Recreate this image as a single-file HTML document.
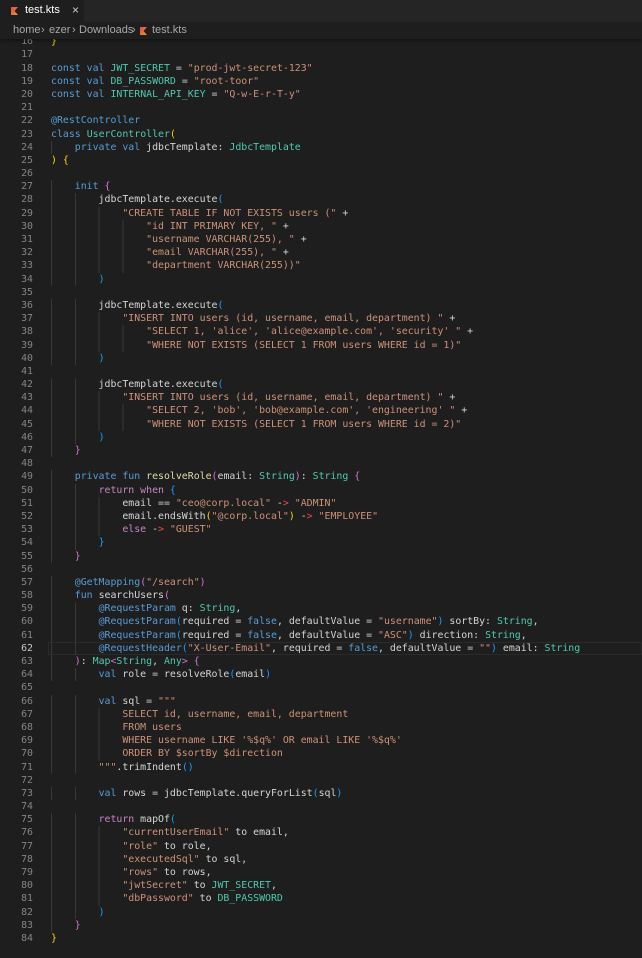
<!DOCTYPE html>
<html><head><meta charset="utf-8"><style>
*{margin:0;padding:0;box-sizing:border-box}
body{width:642px;height:958px;background:#1e1e1e;overflow:hidden;position:relative;font-family:"DejaVu Sans Mono","Liberation Mono",monospace}
#tabs{position:absolute;left:0;top:0;width:642px;height:22px;background:#252526;z-index:3}
#tab{position:absolute;left:0;top:0;width:85px;height:22px;background:#1e1e1e;border-right:1px solid #252526}
#tab .n{position:absolute;left:25px;top:4px;font:11px "Liberation Sans",sans-serif;color:#fff}
#tab .x{position:absolute;left:72px;top:3px;font:12px "Liberation Sans",sans-serif;color:#ccc}
.kt{position:absolute;width:7px;height:8px;background:linear-gradient(135deg,#e44857 0,#e8772e 60%,#f6a02a 100%);clip-path:polygon(0 0,100% 0,50% 50%,100% 100%,0 100%)}
#bc{position:absolute;left:0;top:22px;width:642px;height:17px;background:#1e1e1e;z-index:3;font:11px "Liberation Sans",sans-serif;color:#a9a9a9;box-shadow:0 2px 3px rgba(0,0,0,.35)}
#bc span{position:absolute;top:2px;white-space:pre}
#code{position:absolute;left:0;top:35.2px;width:642px}
.l{position:relative;height:13.2px;line-height:13.2px;font-size:9.9px;white-space:pre;color:#d4d4d4}
.l .no{position:absolute;left:0;width:33px;text-align:right;color:#858585}
.l .c{position:absolute;left:51px;top:0;height:13.2px;background-repeat:no-repeat;background-image:repeating-linear-gradient(to right,#383838 0 1px,transparent 1px 23.8px)}
.g0{background-size:0 100%}.g1{background-size:23.8px 100%}.g2{background-size:47.6px 100%}.g3{background-size:71.4px 100%}.g4{background-size:95.2px 100%}
.k{color:#569cd6}.cc{color:#c586c0}.s{color:#ce9178}.t{color:#4ec9b0}.f{color:#dcdcaa}.a{color:#569cd6}
.b1{color:#ffd700}.b2{color:#da70d6}.b3{color:#179fff}.r{color:#f44747}
.cur{border:1px solid #2a2a2a;position:absolute;left:48px;right:0;top:0;height:13.2px}
</style></head><body>
<div id="tabs"><div id="tab"><div class="kt" style="left:11px;top:7px"></div><span class="n">test.kts</span><span class="x">×</span></div></div>
<div id="bc"><span style="left:13px">home</span><span style="left:41px">›</span><span style="left:49px">ezer</span><span style="left:72px">›</span><span style="left:79px">Downloads</span><span style="left:132px">›</span><div class="kt" style="left:140px;top:5px"></div><span style="left:152px">test.kts</span></div>
<div id="code">
<div class="l"><span class="no">16</span><span class="c g0"><span class="b1">}</span></span></div>
<div class="l"><span class="no">17</span><span class="c g0"></span></div>
<div class="l"><span class="no">18</span><span class="c g0"><span class="k">const val</span> <span class="t">JWT_SECRET</span> = <span class="s">"prod-jwt-secret-123"</span></span></div>
<div class="l"><span class="no">19</span><span class="c g0"><span class="k">const val</span> <span class="t">DB_PASSWORD</span> = <span class="s">"root-toor"</span></span></div>
<div class="l"><span class="no">20</span><span class="c g0"><span class="k">const val</span> <span class="t">INTERNAL_API_KEY</span> = <span class="s">"Q-w-E-r-T-y"</span></span></div>
<div class="l"><span class="no">21</span><span class="c g0"></span></div>
<div class="l"><span class="no">22</span><span class="c g0"><span class="a">@RestController</span></span></div>
<div class="l"><span class="no">23</span><span class="c g0"><span class="k">class</span> <span class="t">UserController</span><span class="b1">(</span></span></div>
<div class="l"><span class="no">24</span><span class="c g1">    <span class="k">private val</span> jdbcTemplate: <span class="t">JdbcTemplate</span></span></div>
<div class="l"><span class="no">25</span><span class="c g0"><span class="b1">)</span> <span class="b1">{</span></span></div>
<div class="l"><span class="no">26</span><span class="c g1"></span></div>
<div class="l"><span class="no">27</span><span class="c g1">    <span class="k">init</span> <span class="b2">{</span></span></div>
<div class="l"><span class="no">28</span><span class="c g2">        jdbcTemplate.execute<span class="b3">(</span></span></div>
<div class="l"><span class="no">29</span><span class="c g3">            <span class="s">"CREATE TABLE IF NOT EXISTS users ("</span> +</span></div>
<div class="l"><span class="no">30</span><span class="c g4">                <span class="s">"id INT PRIMARY KEY, "</span> +</span></div>
<div class="l"><span class="no">31</span><span class="c g4">                <span class="s">"username VARCHAR(255), "</span> +</span></div>
<div class="l"><span class="no">32</span><span class="c g4">                <span class="s">"email VARCHAR(255), "</span> +</span></div>
<div class="l"><span class="no">33</span><span class="c g4">                <span class="s">"department VARCHAR(255))"</span></span></div>
<div class="l"><span class="no">34</span><span class="c g2">        <span class="b3">)</span></span></div>
<div class="l"><span class="no">35</span><span class="c g2"></span></div>
<div class="l"><span class="no">36</span><span class="c g2">        jdbcTemplate.execute<span class="b3">(</span></span></div>
<div class="l"><span class="no">37</span><span class="c g3">            <span class="s">"INSERT INTO users (id, username, email, department) "</span> +</span></div>
<div class="l"><span class="no">38</span><span class="c g4">                <span class="s">"SELECT 1, 'alice', 'alice@example.com', 'security' "</span> +</span></div>
<div class="l"><span class="no">39</span><span class="c g4">                <span class="s">"WHERE NOT EXISTS (SELECT 1 FROM users WHERE id = 1)"</span></span></div>
<div class="l"><span class="no">40</span><span class="c g2">        <span class="b3">)</span></span></div>
<div class="l"><span class="no">41</span><span class="c g2"></span></div>
<div class="l"><span class="no">42</span><span class="c g2">        jdbcTemplate.execute<span class="b3">(</span></span></div>
<div class="l"><span class="no">43</span><span class="c g3">            <span class="s">"INSERT INTO users (id, username, email, department) "</span> +</span></div>
<div class="l"><span class="no">44</span><span class="c g4">                <span class="s">"SELECT 2, 'bob', 'bob@example.com', 'engineering' "</span> +</span></div>
<div class="l"><span class="no">45</span><span class="c g4">                <span class="s">"WHERE NOT EXISTS (SELECT 1 FROM users WHERE id = 2)"</span></span></div>
<div class="l"><span class="no">46</span><span class="c g2">        <span class="b3">)</span></span></div>
<div class="l"><span class="no">47</span><span class="c g1">    <span class="b2">}</span></span></div>
<div class="l"><span class="no">48</span><span class="c g1"></span></div>
<div class="l"><span class="no">49</span><span class="c g1">    <span class="k">private fun</span> <span class="f">resolveRole</span><span class="b2">(</span>email: <span class="t">String</span><span class="b2">)</span>: <span class="t">String</span> <span class="b2">{</span></span></div>
<div class="l"><span class="no">50</span><span class="c g2">        <span class="cc">return when</span> <span class="b3">{</span></span></div>
<div class="l"><span class="no">51</span><span class="c g3">            email == <span class="s">"ceo@corp.local"</span> -<span class="r">&gt;</span> <span class="s">"ADMIN"</span></span></div>
<div class="l"><span class="no">52</span><span class="c g3">            email.endsWith<span class="b1">(</span><span class="s">"@corp.local"</span><span class="b1">)</span> -<span class="r">&gt;</span> <span class="s">"EMPLOYEE"</span></span></div>
<div class="l"><span class="no">53</span><span class="c g3">            <span class="cc">else</span> -<span class="r">&gt;</span> <span class="s">"GUEST"</span></span></div>
<div class="l"><span class="no">54</span><span class="c g2">        <span class="b3">}</span></span></div>
<div class="l"><span class="no">55</span><span class="c g1">    <span class="b2">}</span></span></div>
<div class="l"><span class="no">56</span><span class="c g1"></span></div>
<div class="l"><span class="no">57</span><span class="c g1">    <span class="a">@GetMapping</span><span class="b2">(</span><span class="s">"/search"</span><span class="b2">)</span></span></div>
<div class="l"><span class="no">58</span><span class="c g1">    <span class="k">fun</span> searchUsers<span class="b2">(</span></span></div>
<div class="l"><span class="no">59</span><span class="c g2">        <span class="a">@RequestParam</span> q: <span class="t">String</span>,</span></div>
<div class="l"><span class="no">60</span><span class="c g2">        <span class="a">@RequestParam</span><span class="b3">(</span>required = <span class="k">false</span>, defaultValue = <span class="s">"username"</span><span class="b3">)</span> sortBy: <span class="t">String</span>,</span></div>
<div class="l"><span class="no">61</span><span class="c g2">        <span class="a">@RequestParam</span><span class="b3">(</span>required = <span class="k">false</span>, defaultValue = <span class="s">"ASC"</span><span class="b3">)</span> direction: <span class="t">String</span>,</span></div>
<div class="l"><span class="cur"></span><span class="no" style="color:#c6c6c6">62</span><span class="c g2">        <span class="a">@RequestHeader</span><span class="b3">(</span><span class="s">"X-User-Email"</span>, required = <span class="k">false</span>, defaultValue = <span class="s">""</span><span class="b3">)</span> email: <span class="t">String</span></span></div>
<div class="l"><span class="no">63</span><span class="c g1">    <span class="b2">)</span>: <span class="t">Map</span><span class="b2">&lt;</span><span class="t">String</span>, <span class="t">Any</span><span class="b2">&gt;</span> <span class="b2">{</span></span></div>
<div class="l"><span class="no">64</span><span class="c g2">        <span class="k">val</span> role = resolveRole<span class="b3">(</span>email<span class="b3">)</span></span></div>
<div class="l"><span class="no">65</span><span class="c g2"></span></div>
<div class="l"><span class="no">66</span><span class="c g2">        <span class="k">val</span> sql = <span class="s">"""</span></span></div>
<div class="l"><span class="no">67</span><span class="c g3"><span class="s">            SELECT id, username, email, department</span></span></div>
<div class="l"><span class="no">68</span><span class="c g3"><span class="s">            FROM users</span></span></div>
<div class="l"><span class="no">69</span><span class="c g3"><span class="s">            WHERE username LIKE '%$q%' OR email LIKE '%$q%'</span></span></div>
<div class="l"><span class="no">70</span><span class="c g3"><span class="s">            ORDER BY $sortBy $direction</span></span></div>
<div class="l"><span class="no">71</span><span class="c g2"><span class="s">        """</span>.trimIndent<span class="b3">()</span></span></div>
<div class="l"><span class="no">72</span><span class="c g2"></span></div>
<div class="l"><span class="no">73</span><span class="c g2">        <span class="k">val</span> rows = jdbcTemplate.queryForList<span class="b3">(</span>sql<span class="b3">)</span></span></div>
<div class="l"><span class="no">74</span><span class="c g2"></span></div>
<div class="l"><span class="no">75</span><span class="c g2">        <span class="cc">return</span> mapOf<span class="b3">(</span></span></div>
<div class="l"><span class="no">76</span><span class="c g3">            <span class="s">"currentUserEmail"</span> to email,</span></div>
<div class="l"><span class="no">77</span><span class="c g3">            <span class="s">"role"</span> to role,</span></div>
<div class="l"><span class="no">78</span><span class="c g3">            <span class="s">"executedSql"</span> to sql,</span></div>
<div class="l"><span class="no">79</span><span class="c g3">            <span class="s">"rows"</span> to rows,</span></div>
<div class="l"><span class="no">80</span><span class="c g3">            <span class="s">"jwtSecret"</span> to <span class="t">JWT_SECRET</span>,</span></div>
<div class="l"><span class="no">81</span><span class="c g3">            <span class="s">"dbPassword"</span> to <span class="t">DB_PASSWORD</span></span></div>
<div class="l"><span class="no">82</span><span class="c g2">        <span class="b3">)</span></span></div>
<div class="l"><span class="no">83</span><span class="c g1">    <span class="b2">}</span></span></div>
<div class="l"><span class="no">84</span><span class="c g0"><span class="b1">}</span></span></div>
</div>
</body></html>
